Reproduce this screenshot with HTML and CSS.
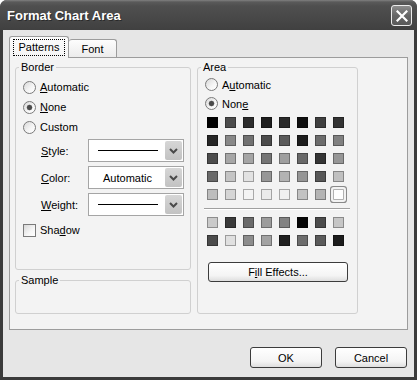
FILE: index.html
```html
<!DOCTYPE html>
<html lang="en">
<head>
   <meta charset="UTF-8">
   <title>Format Chart Area</title>
   <link rel="stylesheet" href="styles.css">
</head>
<body>

   <div class="window">
       <div class="titlebar">
           <span class="title">Format Chart Area</span>
           <button class="close" aria-label="Close">
               <svg width="12" height="12" viewBox="0 0 12 12"><path d="M1.5 1.5l9 9M10.5 1.5l-9 9" stroke="#fff" stroke-width="2.2" stroke-linecap="square"/></svg>
           </button>
       </div>

       <div class="client">
           <div class="tabs">
               <div class="tab active"><span class="focus">Patterns</span></div>
               <div class="tab">Font</div>
           </div>

           <div class="page">
               <div class="col-left">
                   <fieldset class="group border-group">
                       <legend>Border</legend>
                       <div class="group-body">
                           <label class="opt"><span class="radio"></span><span><u>A</u>utomatic</span></label>
                           <label class="opt"><span class="radio on"></span><span><u>N</u>one</span></label>
                           <label class="opt"><span class="radio"></span><span>Custom</span></label>

                           <div class="fields">
                               <div class="field">
                                   <span class="field-label"><u>S</u>tyle:</span>
                                   <div class="combo">
                                       <span class="combo-value"><span class="line"></span></span>
                                       <span class="combo-btn"><svg width="9" height="6" viewBox="0 0 9 6"><path d="M1 1l3.5 3.5L8 1" fill="none" stroke="#4a4a4a" stroke-width="2"/></svg></span>
                                   </div>
                               </div>
                               <div class="field">
                                   <span class="field-label"><u>C</u>olor:</span>
                                   <div class="combo">
                                       <span class="combo-value">Automatic</span>
                                       <span class="combo-btn"><svg width="9" height="6" viewBox="0 0 9 6"><path d="M1 1l3.5 3.5L8 1" fill="none" stroke="#4a4a4a" stroke-width="2"/></svg></span>
                                   </div>
                               </div>
                               <div class="field">
                                   <span class="field-label"><u>W</u>eight:</span>
                                   <div class="combo">
                                       <span class="combo-value"><span class="line"></span></span>
                                       <span class="combo-btn"><svg width="9" height="6" viewBox="0 0 9 6"><path d="M1 1l3.5 3.5L8 1" fill="none" stroke="#4a4a4a" stroke-width="2"/></svg></span>
                                   </div>
                               </div>
                           </div>

                           <label class="opt shadow"><span class="checkbox"></span><span>Sha<u>d</u>ow</span></label>
                       </div>
                   </fieldset>

                   <fieldset class="group sample">
                       <legend>Sample</legend>
                   </fieldset>
               </div>

               <fieldset class="group area">
                   <legend>Area</legend>
                   <div class="area-body">
                       <label class="opt tight"><span class="radio"></span><span>A<u>u</u>tomatic</span></label>
                       <label class="opt tight"><span class="radio on"></span><span>Non<u>e</u></span></label>

                       <div class="swatches" id="paleta"></div>
                       <div class="sep"></div>
                       <div class="swatches" id="rellenos"></div>

                       <button class="btn fill">F<u>i</u>ll Effects...</button>
                   </div>
               </fieldset>
           </div>

           <div class="actions">
               <button class="btn">OK</button>
               <button class="btn">Cancel</button>
           </div>
       </div>
   </div>

   <script>
       // standard palette, rendered in grayscale
       const paleta = [
           '#000000', '#4c4c4c', '#2d2d2d', '#1e1e1e', '#2a2a2a', '#0f0f0f', '#3f3f3f', '#333333',
           '#262626', '#888888', '#717171', '#4b4b4b', '#5a5a5a', '#1d1d1d', '#6c6c6c', '#808080',
           '#4c4c4c', '#a6a6a6', '#a5a5a5', '#757575', '#9e9e9e', '#686868', '#353535', '#969696',
           '#696969', '#c4c4c4', '#e2e2e2', '#969696', '#b3b3b3', '#959595', '#575757', '#c0c0c0',
           '#bdbdbd', '#d5d5d5', '#f3f3f3', '#eaeaea', '#f0f0f0', '#c2c2c2', '#b4b4b4', '#ffffff'
       ];
       const rellenos = [
           '#cacaca', '#3a3a3a', '#6a6a6a', '#9c9c9c', '#828282', '#050505', '#4c4c4c', '#c6c6c6',
           '#4c4c4c', '#e0e0e0', '#8c8c8c', '#a2a2a2', '#202020', '#6c6c6c', '#5a5a5a', '#1c1c1c'
       ];

       function pintar(id, colores, seleccion) {
           const contenedor = document.getElementById(id);
           colores.forEach((color, i) => {
               const sw = document.createElement('span');
               sw.className = i === seleccion ? 'sw sel' : 'sw';
               sw.style.background = color;
               contenedor.appendChild(sw);
           });
       }

       pintar('paleta', paleta, 39);
       pintar('rellenos', rellenos, -1);
   </script>
</body>
</html>
```

FILE: styles.css
```css
* {
    box-sizing: border-box;
}
body {
    margin: 0;
    background: #fff;
    font-family: "Liberation Sans", Arial, sans-serif;
    font-size: 11px;
    color: #000;
}
u {
    text-decoration: underline;
    text-underline-offset: 1px;
}

/* ventana */
.window {
    width: 417px;
    height: 380px;
    display: flex;
    flex-direction: column;
    background: #3b3b3b;
    border-radius: 7px 7px 0 0;
    overflow: hidden;
}
.titlebar {
    height: 30px;
    flex: none;
    display: flex;
    align-items: center;
    justify-content: space-between;
    padding: 1px 5px 0 7px;
    background: linear-gradient(#808080, #5a5a5a 2px, #4f4f4f 6px, #484848 60%, #404040);
}
.title {
    color: #fff;
    font-weight: bold;
    font-size: 13px;
    text-shadow: 1px 1px 0 #2a2a2a;
}
.close {
    width: 21px;
    height: 21px;
    padding: 0;
    border: 1px solid #ececec;
    border-radius: 3px;
    background: linear-gradient(#8c8c8c, #666 50%, #5a5a5a);
    display: flex;
    align-items: center;
    justify-content: center;
}
.client {
    flex: 1;
    margin: 0 3px 3px;
    padding: 6px 6px 0;
    background: #e6e6e6;
    display: flex;
    flex-direction: column;
}

/* pestañas */
.tabs {
    display: flex;
    align-items: flex-end;
    height: 21px;
}
.tab {
    height: 18px;
    width: 48px;
    display: flex;
    align-items: center;
    justify-content: center;
    border: 1px solid #9c9c9c;
    border-left: 0;
    border-bottom: 0;
    border-radius: 3px 3px 0 0;
    background: linear-gradient(#fdfdfd, #ececec);
}
.tab.active {
    width: 60px;
    height: 22px;
    margin-bottom: -1px;
    border-left: 1px solid #9c9c9c;
    background: linear-gradient(#fcfcfc, #f4f4f4);
    position: relative;
    z-index: 1;
}
.focus {
    padding: 1px 5px;
    line-height: 13px;
    border: 1px dotted #000;
}
.page {
    height: 273px;
    flex: none;
    display: flex;
    gap: 6px;
    padding: 3px 5px 0;
    border: 1px solid #9c9c9c;
    background: #f3f3f3;
}

/* grupos */
.group {
    margin: 0;
    padding: 0;
    min-width: 0;
    border: 1px solid #d0d0d0;
    border-radius: 3px;
}
.group legend {
    margin-left: 3px;
    padding: 0 2px;
    line-height: 13px;
}
.col-left {
    width: 176px;
    display: flex;
    flex-direction: column;
    gap: 4px;
}
.border-group {
    height: 209px;
}
.group-body {
    padding: 3px 0 0 7px;
}
.sample {
    height: 40px;
}
.area {
    width: 161px;
    height: 253px;
}
.area-body {
    padding: 1px 0 0 7px;
}

/* opciones */
.opt {
    height: 20px;
    display: flex;
    align-items: center;
    gap: 4px;
}
.opt.tight {
    height: 19px;
}
.radio {
    width: 13px;
    height: 13px;
    flex: none;
    border: 1px solid #7a7a7a;
    border-radius: 50%;
    background: linear-gradient(135deg, #d8d8d8, #f6f6f6 60%, #fff);
}
.radio.on {
    background: radial-gradient(circle, #4a4a4a 0 2px, #7a7a7a 2.6px, transparent 3.2px),
                linear-gradient(135deg, #d8d8d8, #f6f6f6 60%, #fff);
}
.checkbox {
    width: 13px;
    height: 13px;
    flex: none;
    border: 1px solid #7a7a7a;
    background: linear-gradient(135deg, #d8d8d8, #f6f6f6 60%, #fff);
}
.shadow {
    margin-top: 4px;
}

/* campos */
.fields {
    display: flex;
    flex-direction: column;
    gap: 4px;
    margin-top: 2px;
    padding-left: 18px;
}
.field {
    display: flex;
    align-items: center;
}
.field-label {
    width: 47px;
}
.combo {
    width: 96px;
    height: 23px;
    display: flex;
    padding: 1px;
    border: 1px solid #a5a5a5;
    background: #fff;
}
.combo-value {
    flex: 1;
    display: flex;
    align-items: center;
    justify-content: center;
}
.line {
    width: 60px;
    height: 1px;
    background: #000;
}
.combo-btn {
    width: 17px;
    display: flex;
    align-items: center;
    justify-content: center;
    border-radius: 2px;
    background: linear-gradient(#d6d6d6, #c2c2c2);
}

/* colores */
.swatches {
    display: grid;
    grid-template-columns: repeat(8, 11px);
    gap: 7px;
    margin-left: 2px;
}
#paleta {
    margin-top: 4px;
}
.sw {
    width: 11px;
    height: 11px;
    border: 1px solid rgba(0, 0, 0, 0.3);
}
.sw.sel {
    border-radius: 1px;
    box-shadow: 0 0 0 2px #f3f3f3, 0 0 0 3px #8a8a8a;
}
.sep {
    width: 146px;
    height: 2px;
    margin: 8px 0 7px -1px;
    border-top: 1px solid #a0a0a0;
    border-bottom: 1px solid #fff;
}

/* botones */
.btn {
    width: 72px;
    height: 21px;
    padding: 0;
    font-family: inherit;
    font-size: 11px;
    color: #000;
    border: 1px solid #3c3c3c;
    border-radius: 3px;
    background: linear-gradient(#fff, #f4f4f4 70%, #dedede);
}
.btn.fill {
    width: 140px;
    height: 20px;
    margin: 16px 0 0 3px;
}
.actions {
    display: flex;
    justify-content: flex-end;
    gap: 13px;
    margin-top: 17px;
    padding-right: 1px;
}
```
